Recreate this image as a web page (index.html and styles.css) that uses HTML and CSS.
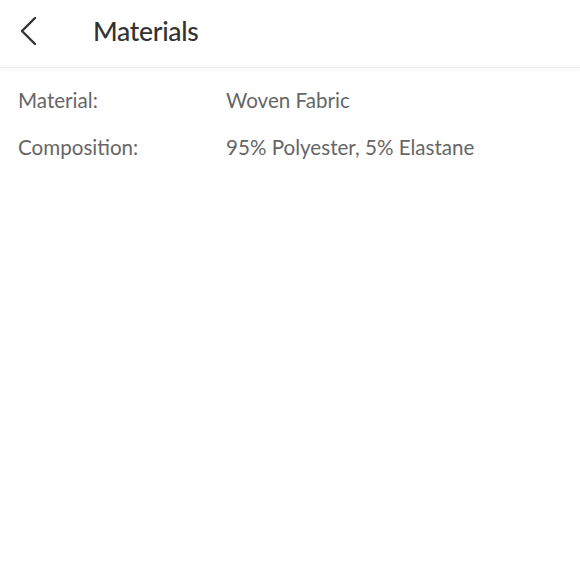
FILE: index.html
```html
<!DOCTYPE html>
<html>
<head>
<meta charset="utf-8">
<link rel="stylesheet" href="styles.css">
</head>
<body>
<header class="topbar">
  <button class="back" aria-label="Back">
    <svg width="18" height="30" viewBox="0 0 18 30"><path d="M16 2 L3 15 L16 28" fill="none" stroke="#333" stroke-width="2.4" stroke-linecap="round" stroke-linejoin="round"/></svg>
  </button>
  <h1 class="title">Materials</h1>
</header>
<main class="specs">
  <div class="row"><span class="label">Material:</span><span class="value">Woven Fabric</span></div>
  <div class="row"><span class="label">Composition:</span><span class="value">95% Polyester, 5% Elastane</span></div>
</main>
</body>
</html>
```
FILE: styles.css
```css
html, body { margin: 0; padding: 0; background: #fff; }
body { font-family: "Lato", "Noto Sans", sans-serif; }
.topbar {
  height: 68px;
  box-sizing: border-box;
  padding-bottom: 6px;
  display: flex;
  align-items: center;
  border-bottom: 1px solid #ececec;
  box-shadow: 0 2px 4px rgba(0,0,0,0.04);
}
.back {
  border: 0; background: none; padding: 0;
  margin-left: 19px; width: 18px; height: 30px;
  display: flex; align-items: center;
}
.title {
  margin: 0 0 0 56px;
  font-size: 26.5px;
  font-weight: 500;
  color: #333;
  letter-spacing: -0.3px;
}
.specs { padding: 19px 18px 0; display: flex; flex-direction: column; gap: 20px; }
.row { display: flex; font-size: 20.6px; color: #666; line-height: 27px; }
.label { width: 208px; flex: none; }
```
